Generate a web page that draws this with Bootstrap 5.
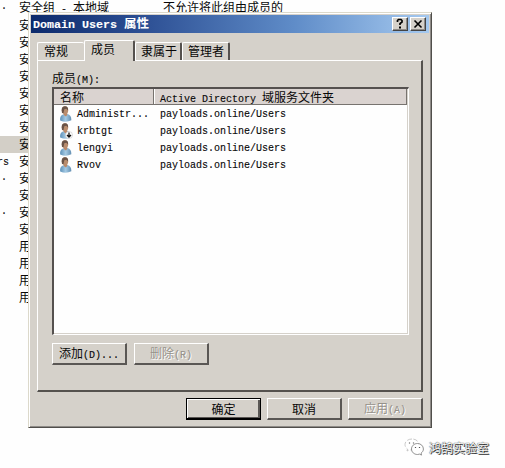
<!DOCTYPE html>
<html lang="zh-CN">
<head>
<meta charset="utf-8">
<meta name="viewport" content="width=device-width, initial-scale=1">
<title>Domain Users 属性</title>
<link href="https://cdn.jsdelivr.net/npm/bootstrap@5.3.0/dist/css/bootstrap.min.css" rel="stylesheet">
<style>
:root{--face:#d5d1ca;--ink:#080808}
body{width:505px;height:468px;background:#fefefe;color:var(--ink);font:12px/17px "Noto Sans CJK SC","Liberation Sans",sans-serif;white-space:nowrap}
.mono{font-family:"Liberation Mono","Noto Sans CJK SC",monospace;font-size:10px;white-space:pre;-webkit-text-stroke:.12px currentColor}
.directory{width:505px}
.entry{height:17px;width:505px;line-height:16px}
.entry .tail{width:19px;padding-left:1px}
.entry .tail.word{padding-left:0;margin-left:-3px;margin-right:3px;line-height:19px}
.entry:first-child{line-height:13px}
.entry .kind{width:144px}
.entry.picked{background:linear-gradient(90deg,#d3cfc7 28px,transparent 28px)}
.window{left:28px;top:12px;width:404px;height:416px;background:var(--face);border:1px solid;border-color:#dcd9cb #504e4b #504e4b #dcd9cb;box-shadow:inset 1px 1px #fff,inset -1px -1px #8e8b87;padding:2px}
.titlebar{height:18px;background:linear-gradient(90deg,#0c2a6c,#2f5296 30%,#5f8cc8 66%,#a5c9ef);color:#fff;font-weight:700;font-size:12.5px;padding:0 3px 0 2px}
.titlebar .mono{font-size:11.67px}
.tool{width:16px;height:14px;background:var(--face);border:1px solid;border-color:#fff #444 #444 #fff;box-shadow:inset -1px -1px #8e8b87}
.tool-pair{gap:2px}
.body-area{padding:7px 6px 0}
.tabstrip{height:20px}
.tab{width:47px;height:18px;line-height:16px;border-top:1px solid #fff;border-right:2px solid #55514e;border-left:1px solid #fff;border-radius:2px 2px 0 0;padding-left:5px}
.tab.ahead{border-right:0;padding-left:6px}
.tab.current{width:51px;height:21px;background:var(--face);padding-left:6px;margin-bottom:-1px;z-index:1}
.tab.last{width:48px}
.sheet{height:332px;width:386px;border:solid;border-width:1px 2px 2px 1px;border-color:#fff #55524e #55524e #fff;padding:8px 12px 0 14px}
.sheet .caption-line{height:18px;line-height:17px}
.listing{width:357px;height:248px;background:#fefefe;border:solid;border-width:2px 1px 1px 2px;border-color:#55514f #fff #fff #55514f;box-shadow:inset -1px -1px #d5d1ca}
.heading{height:16px;background:#dad3d0;line-height:15px;width:353px;border-bottom:1px solid #77736f;border-right:1px solid #77736f;margin-bottom:1px}
.first-col{width:100px;padding-left:6px}
.heading .first-col{border-right:1px solid #77736f;box-shadow:1px 0 #fff}
.second-col{padding-left:6px}
.member .first-col{padding-left:5px}
.member{height:17px;line-height:18px}
.push{width:75px;height:22px;line-height:18px;background:var(--face);border:solid;border-width:1px 2px 2px 1px;border-color:#fff #5a5754 #5a5754 #fff;color:var(--ink);font-size:12px;padding:0}
.push.go{border-color:#000;border-width:1px 1px 2px;box-shadow:inset 1px 1px #fff,inset -2px -1px #5a5754}
.push:disabled{opacity:1;color:#96928b;background:var(--face);border-color:#fff #5a5754 #5a5754 #fff;text-shadow:1px 1px #fff}
.member-tools{gap:7px}
.actions{padding-top:6px;width:386px;gap:6px}
.credit{left:404px;top:436px;height:22px;font-size:12px;color:#fff;text-shadow:1px 1px 0 #333,0 0 1px #444,0 0 1px #555}
</style>
<script src="https://cdn.jsdelivr.net/npm/bootstrap@5.3.0/dist/js/bootstrap.bundle.min.js"></script>
</head>
<body class="m-0 position-relative overflow-hidden">
<main class="directory">
<div class="entry d-flex"><span class="tail mono">.</span><span class="kind">安全组<span class="mono"> - </span>本地域</span><span>不允许将此组由成员的</span></div>
<div class="entry d-flex"><span class="tail"></span>安</div>
<div class="entry d-flex"><span class="tail"></span>安</div>
<div class="entry d-flex"><span class="tail"></span>安</div>
<div class="entry d-flex"><span class="tail"></span>安</div>
<div class="entry d-flex"><span class="tail"></span>安</div>
<div class="entry d-flex"><span class="tail"></span>安</div>
<div class="entry d-flex"><span class="tail"></span>安</div>
<div class="entry d-flex picked"><span class="tail"></span>安</div>
<div class="entry d-flex"><span class="tail mono word">rs</span>安</div>
<div class="entry d-flex"><span class="tail mono">.</span>安</div>
<div class="entry d-flex"><span class="tail"></span>安</div>
<div class="entry d-flex"><span class="tail mono">.</span>安</div>
<div class="entry d-flex"><span class="tail"></span>安</div>
<div class="entry d-flex"><span class="tail"></span>用</div>
<div class="entry d-flex"><span class="tail"></span>用</div>
<div class="entry d-flex"><span class="tail"></span>用</div>
<div class="entry d-flex"><span class="tail"></span>用</div>
</main>

<svg class="position-absolute" width="0" height="0">
<linearGradient id="cloth" x1="0" x2="1"><stop stop-color="#5c90b8"/><stop offset=".5" stop-color="#a5cae4"/><stop offset="1" stop-color="#638fb2"/></linearGradient>
<symbol id="person" viewBox="0 0 14 16"><path d="M1.2 14.5Q.5 9.6 4.5 8.2L8.5 8q4 1 3.8 6.3Q7 17 1.2 14.5Z" fill="url(#cloth)"/><path d="M4.7 7h3.500v2L6.900 10.400 4.700 9Z" fill="#bd8866"/><ellipse cx="6" cy="4.300" rx="3.200" ry="4" fill="#b98d6e"/><path d="M3 7Q1.500.5 5.900.2q3.800.2 3.100 4.200L7.300 2.700 5.300 3.300 4.500 7Z" fill="#695347"/></symbol>
</svg>

<section class="window position-absolute">
<header class="titlebar d-flex align-items-center">
<span class="me-auto"><span class="mono">Domain Users </span>属性</span>
<span class="d-flex tool-pair">
<span class="tool d-flex"><svg width="14" height="12" viewBox="0 0 14 12"><path d="M4.5 4V2.500L5.500 1.500H8L9 2.500V4L7 5.700V7" fill="none" stroke="#000" stroke-width="1.700"/><path d="M6 8.500h2v2H6z"/></svg></span>
<span class="tool d-flex"><svg width="14" height="12" viewBox="0 0 14 12"><path d="M3.500 2.500l7 7m0-7l-7 7" stroke="#000" stroke-width="1.600"/></svg></span>
</span>
</header>
<div class="body-area">
<nav class="tabstrip d-flex align-items-end">
<span class="tab ahead">常规</span><span class="tab current">成员</span><span class="tab">隶属于</span><span class="tab last">管理者</span>
</nav>
<div class="sheet">
<div class="caption-line">成员<span class="mono">(M):</span></div>
<div class="listing">
<div class="heading d-flex"><span class="first-col">名称</span><span class="second-col"><span class="mono">Active Directory </span>域服务文件夹</span></div>
<div class="member d-flex mono"><span class="first-col d-flex"><svg width="14" height="16"><use href="#person"/></svg><span class="ms-1">Administr...</span></span><span class="second-col">payloads.online/Users</span></div>
<div class="member d-flex mono"><span class="first-col d-flex"><svg width="14" height="16"><use href="#person"/><circle cx="10" cy="12" r="3.500" fill="#fff" stroke="#bbb" stroke-width=".5"/><path d="M10 9.500v4.500M8 12l2 2 2-2" fill="none" stroke="#111" stroke-width="1.300"/></svg><span class="ms-1">krbtgt</span></span><span class="second-col">payloads.online/Users</span></div>
<div class="member d-flex mono"><span class="first-col d-flex"><svg width="14" height="16"><use href="#person"/></svg><span class="ms-1">lengyi</span></span><span class="second-col">payloads.online/Users</span></div>
<div class="member d-flex mono"><span class="first-col d-flex"><svg width="14" height="16"><use href="#person"/></svg><span class="ms-1">Rvov</span></span><span class="second-col">payloads.online/Users</span></div>
</div>
<div class="d-flex mt-2 member-tools"><button class="push">添加<span class="mono">(D)...</span></button><button class="push" disabled>删除<span class="mono">(R)</span></button></div>
</div>
<footer class="actions d-flex justify-content-end"><button class="push go">确定</button><button class="push">取消</button><button class="push" disabled>应用<span class="mono">(A)</span></button></footer>
</div>
</section>

<div class="credit position-absolute d-flex align-items-center">
<svg width="21" height="18" viewBox="0 0 21 18" class="me-1" fill="#fff" stroke="#777" stroke-width=".8"><path d="M8 1C4 1 1 3.500 1 6.500c0 2 1 3.500 2.500 4.500L3 13l2.500-1.300q2 .5 4 0Q16 9 14.500 5 13 1 8 1Z" stroke="#bbb" stroke-dasharray="5 2"/><path d="M13.500 5.500C10 5.500 7.500 8 7.500 11s2.500 5.500 6 5.500l2-.4 2 1-.4-2c1.500-1 2.300-2.500 2.300-4.100 0-3-2.500-5.500-5.900-5.500Z"/><path d="M5.500 4.500v1m4-1v1M11.500 9v1m4-1v1" stroke="#555" stroke-width="1.200"/></svg>
<span>鸿鹄实验室</span></div>
</body>
</html>
